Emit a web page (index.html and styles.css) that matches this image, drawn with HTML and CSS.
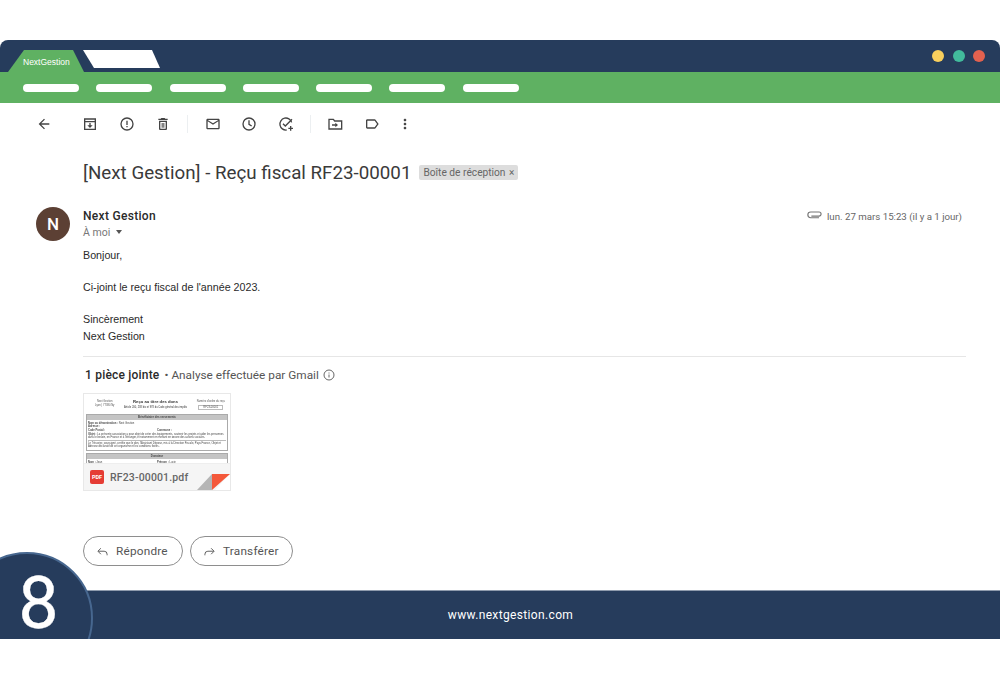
FILE: index.html
```html
<!DOCTYPE html>
<html lang="fr">
<head>
<meta charset="utf-8">
<title>Next Gestion</title>
<link rel="stylesheet" href="styles.css">
</head>
<body>
<div class="window">
  <header class="titlebar">
    <div class="tab tab-active">NextGestion</div>
    <div class="tab tab-blank"></div>
    <div class="dots">
      <span class="dot dot-y"></span><span class="dot dot-g"></span><span class="dot dot-r"></span>
    </div>
  </header>
  <nav class="menubar">
    <span class="pill"></span><span class="pill"></span><span class="pill"></span><span class="pill"></span><span class="pill"></span><span class="pill"></span><span class="pill"></span>
  </nav>
  <main class="mail">
    <div class="toolbar">
      <span class="tool tool-back"><svg viewBox="0 0 24 24"><path class="f" d="M20 11H7.830l5.590-5.590L12 4l-8 8 8 8 1.410-1.410L7.830 13H20v-2z"/></svg></span>
      <span class="tool"><svg viewBox="0 0 24 24"><path class="s" d="M4 20V4.500h16V20zM4 8.500h16"/><path class="f" d="M11 10.500h2v3.500h3l-4 4-4-4h3z"/></svg></span>
      <span class="tool"><svg viewBox="0 0 24 24"><circle class="s" cx="12" cy="12" r="9"/><path class="f" d="M11 7h2v6.500h-2zM11 15h2v2h-2z"/></svg></span>
      <span class="tool"><svg viewBox="0 0 24 24"><path class="f" d="M6 19c0 1.100.9 2 2 2h8c1.100 0 2-.9 2-2V7H6v12zM8 9h8v10H8V9zm7.500-5-1-1h-5l-1 1H5v2h14V4z"/><path class="f" d="M10 10.500h1.500V17.500H10zM12.500 10.500H14V17.500h-1.500z"/></svg></span>
      <span class="tool-sep"></span>
      <span class="tool"><svg viewBox="0 0 24 24"><path class="f" d="M20 4H4c-1.100 0-2 .9-2 2v12c0 1.100.9 2 2 2h16c1.100 0 2-.9 2-2V6c0-1.100-.9-2-2-2zm0 14H4V8l8 5 8-5v10zm-8-7L4 6h16l-8 5z"/></svg></span>
      <span class="tool"><svg viewBox="0 0 24 24"><circle class="s" cx="12" cy="12" r="9"/><path class="s" d="M12 6.500V12.500L16 15"/></svg></span>
      <span class="tool"><svg viewBox="0 0 24 24"><path class="s" d="M20.500 9.500A9 9 0 1 0 13 21"/><path class="s" d="M7.500 11.500l3.500 3.500 10-10M19 15v7M15.500 18.500h7"/></svg></span>
      <span class="tool-sep"></span>
      <span class="tool"><svg viewBox="0 0 24 24"><path class="s" d="M3 19.500V5h6.500l2 2.500H22v12z"/><path class="f" d="M7.500 12.500h5V10l4 3.500-4 3.500v-2.500h-5z"/></svg></span>
      <span class="tool"><svg viewBox="0 0 24 24"><path class="f" d="M17.630 5.840C17.270 5.330 16.670 5 16 5L5 5.010C3.900 5.010 3 5.900 3 7v10c0 1.100.9 1.990 2 1.990L16 19c.67 0 1.270-.33 1.630-.84L22 12l-4.370-6.160zM16 17H5V7h11l3.550 5L16 17z"/></svg></span>
      <span class="tool tool-more"><svg viewBox="0 0 24 24"><path class="f" d="M12 8c1.100 0 2-.9 2-2s-.9-2-2-2-2 .9-2 2 .9 2 2 2zm0 2c-1.100 0-2 .9-2 2s.9 2 2 2 2-.9 2-2-.9-2-2-2zm0 6c-1.100 0-2 .9-2 2s.9 2 2 2 2-.9 2-2-.9-2-2-2z"/></svg></span>
    </div>

    <div class="subject">
      <h1>[Next Gestion] - Reçu fiscal RF23-00001</h1>
      <span class="badge">Boîte de réception <span class="badge-x">×</span></span>
    </div>

    <div class="message">
      <div class="avatar">N</div>
      <div class="message-body">
        <div class="meta">
          <div class="sender">Next Gestion</div>
          <div class="date">
            <svg class="clip" viewBox="0 0 16 10"><path d="M4.500 6.800h8.500a2.300 2.300 0 0 0 0-4.600H3.800a3.200 3.200 0 0 0 0 6.400H13" /></svg>
            lun. 27 mars 15:23 (il y a 1 jour)
          </div>
        </div>
        <div class="to">À moi <span class="caret"></span></div>
        <p class="line first">Bonjour,</p>
        <p class="line gap">Ci-joint le reçu fiscal de l'année 2023.</p>
        <p class="line gap">Sincèrement</p>
        <p class="line">Next Gestion</p>
        <hr class="rule">
        <div class="att-head">
          <strong>1 pièce jointe</strong>
          <span class="att-note">• Analyse effectuée par Gmail</span>
          <svg class="info" viewBox="0 0 24 24"><circle cx="12" cy="12" r="10"/><path d="M12 11v6M12 7v2"/></svg>
        </div>
        <div class="attachment">
          <div class="doc">
            <div class="doc-top">
              <div class="doc-small">Next Gestion<br>Lyon | 77380 Ny</div>
              <div class="doc-title"><b>Reçu au titre des dons</b><span>Article 200, 238 bis et 978 du Code général des impôts</span></div>
              <div class="doc-small doc-num">Numéro d'ordre du reçu<span class="doc-box">RF23-00001</span></div>
            </div>
            <div class="doc-card">
              <div class="doc-bar">Bénéficiaire des versements</div>
              <div class="doc-in">
                <p><b>Nom ou dénomination :</b> Next Gestion</p>
                <p><b>Adresse :</b></p>
                <p class="doc-two"><span><b>Code Postal :</b></span><span><b>Commune :</b></span></p>
                <p><b>Objet :</b> La présente association a pour objet de créer des équipements, soutenir les projets et aider les personnes dans le besoin, en France et à l'étranger, et notamment en mettant en œuvre des actions sociales.</p>
                <p class="doc-sepd">Le Trésorier, soussigné, certifie que le don, l'Assistant Dépose, mis à la Direction Fiscale, Pays France, Objet et Adresse déclaratif de cet organisme et les conditions fixées.</p>
              </div>
            </div>
            <div class="doc-card doc-card2">
              <div class="doc-bar">Donateur</div>
              <div class="doc-in">
                <p class="doc-two"><span><b>Nom :</b> Jean</span><span><b>Prénom :</b> Lucie</span></p>
              </div>
            </div>
          </div>
          <div class="file">
            <span class="pdf">PDF</span>
            <span class="file-name">RF23-00001.pdf</span>
            <span class="fold"></span>
          </div>
        </div>
        <div class="actions">
          <button class="btn btn-reply"><svg viewBox="0 0 24 24"><path d="M9 6 3.500 11.500 9 17M4 11.500h11a5.500 5.500 0 0 1 5.500 5.500v2"/></svg>Répondre</button>
          <button class="btn btn-fwd"><svg viewBox="0 0 24 24"><path d="M15 6l5.500 5.500L15 17M20 11.500H9A5.500 5.500 0 0 0 3.500 17v2"/></svg>Transférer</button>
        </div>
      </div>
    </div>
  </main>
  <footer class="footer">www.nextgestion.com</footer>
  <div class="step">8</div>
</div>
</body>
</html>
```
FILE: styles.css
```css
* { box-sizing: border-box; }
html, body { margin: 0; padding: 0; background: #fff; }
body { font-family: Roboto, "Liberation Sans", sans-serif; color: #222; height: 679px; overflow: hidden; padding-top: 40px; }

.window { position: relative; height: 599px; display: flex; flex-direction: column; overflow: hidden; border-radius: 8px 8px 0 0; background: #fff; }

.titlebar { height: 32px; flex: none; background: #263c5c; display: flex; align-items: flex-end; padding-left: 8px; }
.tab { height: 22px; flex: none; }
.tab-active { width: 76px; background: #5fb162; color: #fff; font-size: 8.500px; line-height: 25px; padding-left: 15px; clip-path: polygon(0 100%, 16px 0, 65px 0, 100% 100%); font-family: "Liberation Sans", sans-serif; }
.tab-blank { width: 77px; height: 18px; margin: 0 0 4px -1px; background: #fff; clip-path: polygon(0 0, 69px 0, 100% 100%, 11px 100%); }
.dots { margin: 0 15px 10px auto; display: flex; gap: 8.500px; }
.dot { width: 12px; height: 12px; border-radius: 50%; }
.dot-y { background: #f8cf5d; }
.dot-g { background: #42bb9c; }
.dot-r { background: #e2614f; }

.menubar { height: 31px; flex: none; background: #5fb162; display: flex; align-items: center; gap: 17.300px; padding: 0 0 0 23px; }
.pill { width: 56px; height: 8px; background: #fff; border-radius: 4px; }

.mail { flex: 1; min-height: 0; }
.toolbar { height: 41px; display: flex; align-items: center; padding-left: 26px; }
.tool { width: 36.500px; height: 16px; display: flex; justify-content: center; flex: none; }
.tool svg { width: 16px; height: 16px; }
.tool-back { margin-right: 9.500px; }
.tool-more { margin-left: -3.500px; }
.tool-sep { width: 1px; height: 18px; background: #eceff1; margin: 0 6.500px 0 5.500px; flex: none; }
.f { fill: #444; }
.s { fill: none; stroke: #444; stroke-width: 2; }

.subject { display: flex; align-items: center; gap: 8px; padding: 17px 0 0 83px; height: 40px; }
.subject h1 { margin: 0; font-size: 18.750px; font-weight: 400; color: #3a3a3a; line-height: 22px; white-space: nowrap; }
.badge { background: #dddddd; color: #666; font-size: 10.200px; height: 15px; line-height: 15px; padding: 0 4px; border-radius: 2px; white-space: nowrap; }
.badge-x { font-size: 10px; margin-left: 1px; }

.message { display: flex; padding: 24px 34px 0 36px; }
.avatar { width: 34px; height: 34px; flex: none; margin: -1px 13px 0 0; border-radius: 50%; background: #5c4034; color: #fff; font-size: 17px; font-weight: 500; display: flex; align-items: center; justify-content: center; }
.message-body { flex: 1; min-width: 0; }
.meta { display: flex; justify-content: space-between; align-items: center; height: 16px; }
.sender { font-size: 12px; font-weight: 500; color: #2a2a2a; letter-spacing: .3px; }
.date { font-size: 9.700px; color: #666; display: flex; align-items: center; gap: 5px; margin-right: 4px; }
.clip { width: 15px; height: 9px; fill: none; stroke: #777; stroke-width: 1.300; margin-top: -3px; }
.to { font-size: 10.500px; color: #777; height: 16px; line-height: 16px; margin-top: 1px; }
.caret { display: inline-block; border: 3.500px solid transparent; border-top: 4px solid #555; border-bottom: 0; margin: 0 0 2px 3px; }
.line { margin: 0; font-family: "Liberation Sans", sans-serif; font-size: 10.700px; line-height: 16.500px; color: #2a2a2a; }
.first { margin-top: 6px; }
.gap { margin-top: 15.500px; }
.rule { border: 0; border-top: 1px solid #e6e6e6; margin: 12px 0 0; }
.att-head { display: flex; align-items: center; height: 16px; margin: 10px 0 0 2px; font-size: 12px; color: #555; }
.att-head strong { font-weight: 500; color: #2a2a2a; letter-spacing: .2px; }
.att-note { margin-left: 5px; font-size: 11.800px; }
.info { width: 12px; height: 12px; margin-left: 4px; fill: none; stroke: #555; stroke-width: 1.800; }

.attachment { position: relative; width: 148px; height: 98px; margin-top: 10px; border: 1px solid #e8e8e8; display: flex; flex-direction: column; overflow: hidden; }
.doc { height: 71px; overflow: hidden; padding: 5px 2px 0; font-family: "Liberation Sans", sans-serif; color: #555; filter: blur(.3px); }
.doc-top { display: flex; justify-content: space-between; height: 15px; padding: 0 3px; align-items: flex-start; }
.doc-small { font-size: 2.700px; line-height: 3.500px; text-align: center; padding: 1px 0 0 6px; }
.doc-num { padding: 1px 0 0; display: flex; flex-direction: column; align-items: center; gap: 1px; }
.doc-box { border: 1px solid #bbb; padding: 0 4px; }
.doc-title { display: flex; flex-direction: column; align-items: center; font-size: 2.600px; color: #333; gap: 1.500px; }
.doc-title b { font-size: 4.200px; line-height: 5px; }
.doc-card { border: 1px solid #aaa; }
.doc-card2 { margin-top: 2.500px; }
.doc-bar { background: #c4c4c4; height: 5px; line-height: 5px; font-size: 2.800px; font-weight: 700; text-align: center; color: #444; }
.doc-in { padding: 1.500px 1px .5px; font-size: 2.700px; line-height: 3.100px; color: #444; }
.doc-in p { margin: 0 0 .8px; }
.doc-two { display: flex; }
.doc-two span { width: 50%; }
.doc-sepd { border-top: 1px solid #bbb; margin-top: 1px !important; padding-top: 1px; }

.file { height: 26px; flex: none; position: relative; background: #f5f5f5; display: flex; align-items: center; padding-left: 6px; gap: 6px; box-shadow: 0 -1px 0 #eee; }
.pdf { width: 14px; height: 14px; border-radius: 2px; background: #e53c34; color: #fff; font-size: 5.500px; font-weight: 700; line-height: 14px; text-align: center; }
.file-name { font-size: 10.500px; font-weight: 500; color: #666; letter-spacing: .15px; }
.fold { position: absolute; right: 0; bottom: 0; width: 33px; height: 16px; }
.fold::before { content: ""; position: absolute; inset: 0; background: #fff; clip-path: polygon(100% 0, 100% 100%, 55% 100%); }
.fold::after { content: ""; position: absolute; inset: 0; background: linear-gradient(90deg, #b5b5b5 0 45.500%, #f4583a 45.500%); clip-path: polygon(100% 0, 45.500% 100%, 0 100%, 45.500% 0); }

.actions { display: flex; gap: 7px; margin-top: 45px; }
.btn { height: 30px; border: 1px solid #8e8e8e; border-radius: 15px; background: #fff; color: #555; font: 400 11.800px Roboto, sans-serif; display: flex; align-items: center; gap: 7px; padding: 0 0 0 12px; letter-spacing: .2px; }
.btn svg { width: 13px; height: 13px; fill: none; stroke: #555; stroke-width: 1.700; }
.btn-reply { width: 100px; }
.btn-fwd { width: 103px; }

.footer { height: 49px; flex: none; background: #263c5c; border-top: 1px solid #8e9bad; color: #fff; font-size: 12px; letter-spacing: .35px; text-align: center; line-height: 49px; padding-left: 21px; }
.step { position: absolute; left: -39px; top: 512px; width: 132px; height: 132px; border-radius: 50%; background: #263c5c; border: 2px solid #47678f; color: #fff; font-size: 72px; line-height: 100px; text-align: center; padding-left: 23px; -webkit-text-stroke: .3px #fff; }
```
